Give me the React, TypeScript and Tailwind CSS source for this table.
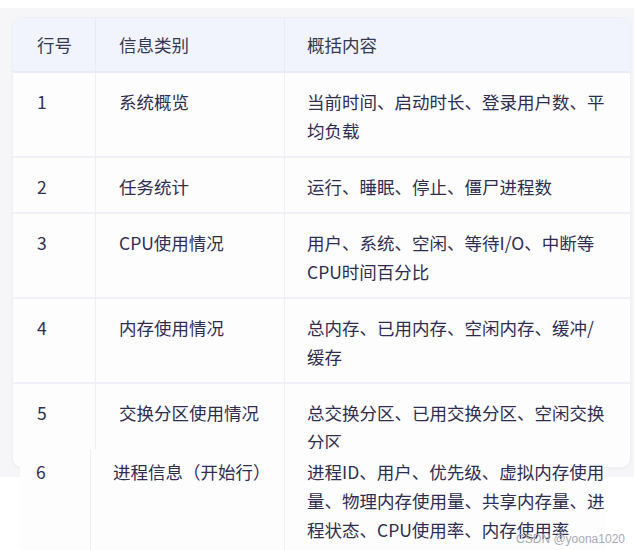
const rows = [
  { no: '1', kind: '系统概览', lines: ['当前时间、启动时长、登录用户数、平', '均负载'] },
  { no: '2', kind: '任务统计', lines: ['运行、睡眠、停止、僵尸进程数'] },
  { no: '3', kind: 'CPU使用情况', lines: ['用户、系统、空闲、等待I/O、中断等', 'CPU时间百分比'] },
  { no: '4', kind: '内存使用情况', lines: ['总内存、已用内存、空闲内存、缓冲/', '缓存'] },
  { no: '5', kind: '交换分区使用情况', lines: ['总交换分区、已用交换分区、空闲交换', '分区'] },
];

const lastRow = {
  no: '6',
  kind: '进程信息（开始行）',
  lines: ['进程ID、用户、优先级、虚拟内存使用', '量、物理内存使用量、共享内存量、进', '程状态、CPU使用率、内存使用率'],
};

function Lines({ lines }: { lines: string[] }) {
  return (
    <>
      {lines.map((l) => (
        <div key={l} className="whitespace-nowrap">
          {l}
        </div>
      ))}
    </>
  );
}

export default function App() {
  return (
    <div
      className="relative h-[550px] w-[634px] overflow-hidden bg-white text-[17.5px] leading-[29px] text-[#2f2d50]"
      style={{ fontFamily: '"Noto Sans CJK SC", "Noto Sans", sans-serif' }}
    >
      <div className="mt-2 h-[469px] bg-[#f6f6f8] pl-3 pr-[3px] pt-[9px]">
        <div className="overflow-hidden rounded-[10px] border border-[#eef0f5] bg-[#fdfdfe] shadow-[0_1px_3px_rgba(0,0,0,0.04)]">
          <div className="grid h-[55px] grid-cols-[83px_189px_1fr] border-b-2 border-[#e9ecf6] bg-[#f1f4fc] text-[#353a52]">
            <div className="flex items-center border-r border-[#e8ebf3] pl-[24px]">行号</div>
            <div className="flex items-center border-r border-[#e8ebf3] pl-[23px]">信息类别</div>
            <div className="flex items-center pl-[22px]">概括内容</div>
          </div>
          {rows.map((r) => (
            <div
              key={r.no}
              className="grid grid-cols-[83px_189px_1fr] border-b-2 border-[#f0f1f6] last:border-b-0"
            >
              <div className="border-r border-[#eff0f5] pb-[11px] pl-[24px] pt-[14px]">{r.no}</div>
              <div className="border-r border-[#eff0f5] pb-[11px] pl-[23px] pt-[14px] whitespace-nowrap">{r.kind}</div>
              <div className="pb-[11px] pl-[22px] pt-[14px]">
                <Lines lines={r.lines} />
              </div>
            </div>
          ))}
        </div>
      </div>

      {/* pasted last row, lies over the card's bottom edge */}
      <div className="absolute left-[20px] top-[449px] grid h-[110px] w-[585px] grid-cols-[71px_194px_1fr] bg-[#fdfdfe]">
        <div className="border-r border-[#eff0f5] pl-[16px] pt-[8px]">{lastRow.no}</div>
        <div className="border-r border-[#eff0f5] pl-[22px] pt-[8px] whitespace-nowrap">{lastRow.kind}</div>
        <div className="pl-[22px] pt-[8px]">
          <Lines lines={lastRow.lines} />
        </div>
      </div>

      <div
        className="absolute bottom-[5px] right-[9px] text-[12px] leading-none text-[#a9a9b2]"
        style={{ fontFamily: '"Liberation Sans", sans-serif' }}
      >
        CSDN @yoona1020
      </div>
    </div>
  );
}
